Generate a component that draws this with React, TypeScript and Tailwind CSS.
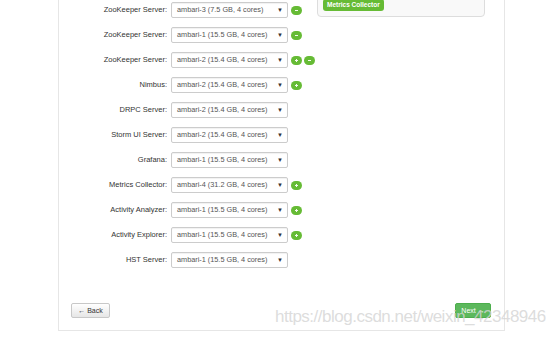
import React from "react";

type Row = { label: string; host: string; badges: ("+" | "-")[] };

const rows: Row[] = [
  { label: "ZooKeeper Server:", host: "ambari-3 (7.5 GB, 4 cores)", badges: ["-"] },
  { label: "ZooKeeper Server:", host: "ambari-1 (15.5 GB, 4 cores)", badges: ["-"] },
  { label: "ZooKeeper Server:", host: "ambari-2 (15.4 GB, 4 cores)", badges: ["+", "-"] },
  { label: "Nimbus:", host: "ambari-2 (15.4 GB, 4 cores)", badges: ["+"] },
  { label: "DRPC Server:", host: "ambari-2 (15.4 GB, 4 cores)", badges: [] },
  { label: "Storm UI Server:", host: "ambari-2 (15.4 GB, 4 cores)", badges: [] },
  { label: "Grafana:", host: "ambari-1 (15.5 GB, 4 cores)", badges: [] },
  { label: "Metrics Collector:", host: "ambari-4 (31.2 GB, 4 cores)", badges: ["+"] },
  { label: "Activity Analyzer:", host: "ambari-1 (15.5 GB, 4 cores)", badges: ["+"] },
  { label: "Activity Explorer:", host: "ambari-1 (15.5 GB, 4 cores)", badges: ["+"] },
  { label: "HST Server:", host: "ambari-1 (15.5 GB, 4 cores)", badges: [] },
];

function Badge({ sign }: { sign: "+" | "-" }) {
  return (
    <div className="w-[11px] h-[9px] rounded-full bg-[#66bb35] flex items-center justify-center">
      {sign === "+" ? (
        <svg width="5" height="5" viewBox="0 0 5 5">
          <rect x="1" y="2" width="3" height="1" fill="#f4fbef" />
          <rect x="2" y="1" width="1" height="3" fill="#f4fbef" />
        </svg>
      ) : (
        <svg width="5" height="5" viewBox="0 0 5 5">
          <rect x="1" y="2" width="3" height="1" fill="#f4fbef" />
        </svg>
      )}
    </div>
  );
}

export default function App() {
  return (
    <div
      className="relative w-[554px] h-[338px] bg-white overflow-hidden"
      style={{ fontFamily: '"Liberation Sans", Arial, sans-serif' }}
    >
      <div className="ml-[58px] w-[447px] h-[331px] border-x border-b border-[#e6e6e6] flex flex-col">
        <div className="flex">
          <div className="w-[258px] pt-[2px] flex flex-col gap-[9px]">
            {rows.map((r, i) => (
              <div key={i} className="flex items-center h-[16px]">
                <div className="w-[108px] text-right text-[7.5px] text-[#333] leading-none">{r.label}</div>
                <div className="ml-[4px] w-[117px] h-[16px] border border-[#cccccc] rounded-[2px] bg-white shadow-[inset_0_1px_1px_rgba(0,0,0,0.06)] flex items-center justify-between pl-[5px] pr-[4px]">
                  <span className="text-[7.3px] text-[#555] leading-none">{r.host}</span>
                  <span className="text-[6px] text-[#333] leading-none">▼</span>
                </div>
                <div className="ml-[3px] flex gap-[2px]">
                  {r.badges.map((b, j) => (
                    <Badge key={j} sign={b} />
                  ))}
                </div>
              </div>
            ))}
          </div>
          <div className="w-[168px] h-[37px] mt-[-20px] border border-[#dddddd] rounded-[4px] bg-[#f9f9f9] flex items-end pl-[5px] pb-[5px]">
            <div className="h-[12px] px-[4px] rounded-[3px] bg-[#66bb35] text-white text-[6.5px] font-bold flex items-center leading-none">
              Metrics Collector
            </div>
          </div>
        </div>
        <div className="mt-[35px] px-[12px] pr-[13px] flex justify-between">
          <div className="w-[39px] h-[15px] border border-[#c8c8c8] rounded-[2px] bg-gradient-to-b from-white to-[#e6e6e6] text-[7px] text-[#333] flex items-center justify-center leading-none">
            ← Back
          </div>
          <div className="w-[36px] h-[15px] border border-[#4cae4c] rounded-[2px] bg-[#5cb85c] text-[7px] text-white flex items-center justify-center leading-none">
            Next →
          </div>
        </div>
      </div>
      <div className="absolute left-[275px] top-[308px] text-[17px] leading-none tracking-[-0.5px] text-[#d4d4d4]/80 whitespace-nowrap">
        https://blog.csdn.net/weixin_42348946
      </div>
    </div>
  );
}
